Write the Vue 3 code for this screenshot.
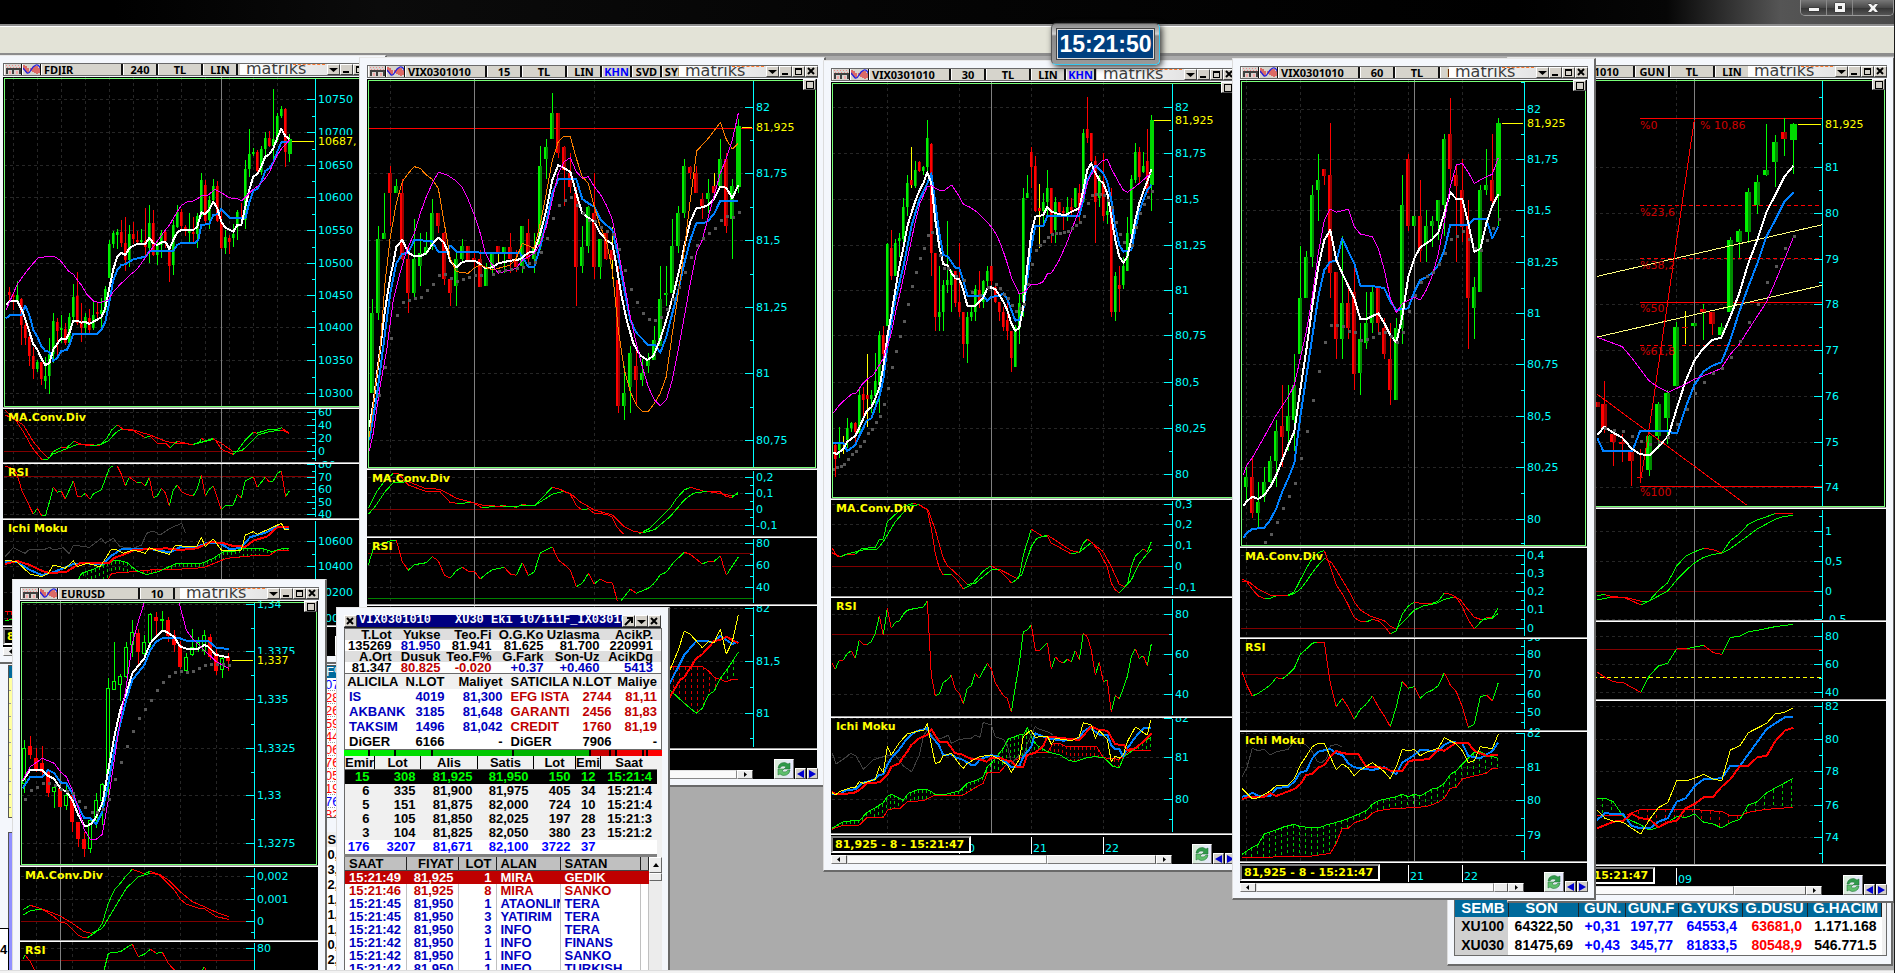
<script setup>
const UNIT = 3

const parse = (s) => s.trim().split(/\s+/).map((t) => t.split(',').map(Number))

function place(list, o) {
  return list.map(([x, y]) => [o[0] + x / UNIT, o[1] + y / UNIT])
}

function poly(s, o) {
  return place(parse(s), o).map((p) => p[0].toFixed(1) + ',' + p[1].toFixed(1)).join(' ')
}

/* Splits a curve into its rising and falling pieces. */
function trend(s, o) {
  const p = place(parse(s), o)
  const out = { up: '', down: '' }
  for (let i = 1; i < p.length; i++) {
    const k = p[i][1] < p[i - 1][1] ? 'up' : 'down'
    out[k] += `M${p[i - 1][0].toFixed(1)} ${p[i - 1][1].toFixed(1)}L${p[i][0].toFixed(1)} ${p[i][1].toFixed(1)}`
  }
  return out
}

function valueAt(p, x) {
  for (let i = 1; i < p.length; i++) {
    if (x >= p[i - 1][0] && x <= p[i][0]) {
      const k = (x - p[i - 1][0]) / (p[i][0] - p[i - 1][0] || 1)
      return p[i - 1][1] + k * (p[i][1] - p[i - 1][1])
    }
  }
  return null
}

/* Vertical hatching between the two edges of the cloud. */
function hatch(green, red, step, o) {
  const a = parse(green)
  const b = parse(red)
  const out = { up: '', down: '' }
  for (let x = a[0][0] + step / 2; x < a[a.length - 1][0]; x += step) {
    const ya = valueAt(a, x)
    const yb = valueAt(b, x)
    if (ya === null || yb === null || Math.abs(ya - yb) < 4) continue
    const px = Math.round(o[0] + x / UNIT) + 0.5
    out[ya < yb ? 'up' : 'down'] += `M${px} ${(o[1] + Math.min(ya, yb) / UNIT).toFixed(1)}V${(o[1] + Math.max(ya, yb) / UNIT).toFixed(1)}`
  }
  return out
}

function candles(s, o, w, hollow) {
  const list = s.trim().split(/\s+/)
  return list.map((t, i) => {
    const kind = t[0]
    const [x, hi, lo, top, bot] = t.slice(1).split(',').map(Number)
    const wide = i === list.length - 1 && !hollow ? 1 : 0
    const cx = Math.round(o[0] + x / UNIT)
    const y = (v) => Math.round(o[1] + v / UNIT)
    const up = kind === 'g'
    return {
      cx, w: w + wide, left: cx - Math.floor(w / 2),
      hi: y(hi), lo: y(lo), top: y(top), h: Math.max(1, y(bot) - y(top)),
      wick: kind === 'y' ? '#ffff00' : kind === 'r' ? '#ff0000' : '#00ff00',
      light: up ? (wide ? '#00d800' : '#00f000') : '#ff0000',
      dark: up ? (wide ? '#00d800' : '#008c00') : hollow ? '#ff0000' : '#a00000',
      hollow: hollow && up
    }
  })
}

const W = 'white', B = '#0080ff', M = '#ff00ff', O = '#ff8000', Y = '#ffff00', R = '#ff0000', D = '#404040'

const source = [
  {
    id: 'fdjir', name: 'FDJIR', cells: ['240', 'TL', 'LIN'], x: 3, right: 379, titleY: 63, axis: 315, cross: 221, bottoms: [407, 462, 518, 625],
    grid: [13, 37, 61, 85, 109, 133, 157, 181, 205, 229, 253, 277], ticks: [], thumb: 30, z: 1,
    panes: [
      { o: [0, 0], labels: [['10750', 298], ['10700', 396], ['10650', 494], ['10600', 592], ['10550', 689], ['10500', 788], ['10450', 886], ['10400', 982], ['10350', 1081], ['10300', 1178]], last: ['10687,', 422, 876],
        cw: 3, candles: 'r28,862,905,877,885 r40,880,930,885,890 g52,843,905,885,903 r64,893,1035,898,975 r76,960,1035,975,1015 r88,990,1098,1010,1068 r100,1040,1137,1068,1107 g112,1080,1115,1085,1107 r124,1085,1155,1085,1137 g136,1070,1167,1128,1142 g148,1013,1182,1063,1128 g160,938,1090,963,1063 r172,955,1068,965,993 g184,945,1030,985,990 r196,970,1035,988,1030 g208,938,1035,952,1030 g220,853,965,890,950 r232,815,975,888,970 r244,910,1027,970,983 g256,940,1005,952,985 r268,928,1003,953,990 g280,905,990,945,985 r292,910,960,935,943 g304,895,985,930,943 g316,857,935,867,930 g328,720,835,732,833 g340,693,743,700,733 g352,687,747,697,705 r364,660,740,697,728 r376,650,813,728,780 g388,675,800,703,780 r400,665,733,703,718 r412,693,735,720,725 g424,687,735,720,725 r436,623,765,723,740 g448,615,790,670,745 r460,630,767,670,765 g472,725,795,735,765 g484,690,775,700,735 r496,687,745,697,723 r508,740,845,745,797 g520,660,825,675,795 g532,615,685,637,680 r544,627,690,637,677 r556,675,707,680,693 g568,640,727,692,700 r580,650,725,695,703 g592,640,743,648,702 g604,518,650,540,648 r616,540,675,555,662 g628,587,687,600,660 g640,537,605,558,600 r652,543,665,557,663 r664,627,748,665,745 g676,690,762,710,745 r688,705,762,713,725 g700,673,742,703,713 g712,630,720,637,680 r724,610,670,650,658 g736,480,687,508,660 g748,387,530,462,508 g760,443,467,455,463 r772,450,515,455,513 g784,437,525,447,515 g796,397,475,413,447 r808,393,440,413,438 g820,267,480,418,438 g832,340,425,347,420 g844,318,353,328,347 r856,323,500,328,457 g868,402,487,418,462',
        lines: [
          [B, 2, '18,955 30,945 64,945 76,917 88,945 100,990 112,1010 124,1038 136,1053 148,1055 160,1083 172,1073 184,1053 200,1050 208,1035 220,1002 292,1002 304,990 316,965 328,905 340,840 352,810 364,795 376,793 400,778 436,770 450,753 520,753 532,735 544,728 585,728 595,720 604,675 628,672 640,645 652,643 664,627 688,653 736,655 748,607 760,572 772,567 784,545 796,513 808,505 820,487 832,455 844,427 868,425'],
          [W, 2, '18,915 30,903 52,903 70,940 85,985 100,1033 112,1048 124,1075 136,1095 148,1090 160,1048 184,1015 198,1018 208,1000 220,962 232,962 244,968 256,965 268,972 280,965 304,952 316,925 328,865 340,808 352,770 364,758 376,765 388,745 400,737 412,732 436,732 448,713 460,730 472,735 488,725 498,728 508,747 520,720 532,697 544,690 580,690 592,680 604,637 616,643 628,628 640,605 652,625 664,665 676,683 700,695 712,675 724,675 736,620 748,570 760,530 772,522 784,500 796,470 808,463 820,445 832,413 844,387 856,408 868,417'],
          [M, 1, '18,930 40,880 52,853 70,827 85,808 100,790 115,773 160,768 180,780 205,813 220,823 232,840 244,855 262,885 280,903 300,908 325,900 340,875 364,850 376,840 388,827 412,807 436,773 460,740 484,707 496,690 510,673 520,655 532,635 544,617 562,605 580,603 592,597 604,588 625,585 645,568 664,578 688,593 715,597 725,602 745,583 760,568 780,553 796,535 808,517 820,490 832,465 844,447 868,420']
        ] },
      { o: [0, 400], title: 'MA.Conv.Div', labels: [['60', 35], ['40', 74], ['20', 113], ['0', 154], ['-20', 194]], levels: [['#800000', 154]],
        trends: ['15,30 50,65 70,95 95,140 110,160 127,180 145,178 160,155 184,142 200,143 222,124 244,133 300,136 320,115 335,90 352,75 370,88 400,92 436,113 450,108 472,130 500,132 510,143 532,124 580,135 600,125 604,115 616,122 640,115 652,128 664,148 700,163 712,153 736,120 760,97 770,100 800,90 835,87 845,83 868,103', '15,45 40,55 70,75 100,125 125,155 145,175 160,162 190,150 235,132 270,137 300,134 325,122 350,95 365,87 400,90 450,105 500,125 530,130 580,133 640,118 664,130 700,155 725,152 750,130 775,105 800,97 840,90 868,97'] },
      { o: [0, 400], title: 'RSI', labels: [['80', 193], ['70', 232], ['60', 266], ['50', 305], ['40', 343]], levels: [['#800000', 229]],
        trends: ['15,198 35,205 50,220 65,270 100,343 112,325 125,347 137,345 150,300 160,260 172,277 184,273 196,297 220,242 232,288 244,290 256,280 270,298 280,282 304,270 315,240 328,205 338,198', '352,198 365,225 376,258 388,232 412,248 424,247 436,258 448,233 460,293 472,288 484,265 496,278 508,318 520,270 532,255 545,275 560,283 580,288 592,265 604,225 616,287 628,268 640,257 652,295 664,328 676,317 700,315 712,283 724,293 736,242 760,230 772,262 796,232 808,246 820,243 832,220 844,213 857,290 868,273'] },
      { o: [0, 400], title: 'Ichi Moku', labels: [['10600', 424], ['10400', 499], ['10200', 577], ['10000', 655]],
        cloud: ['15,662 60,655 140,650 225,560 235,538 245,520 280,508 325,487 350,480 380,487 410,512 440,524 475,515 530,490 600,492 640,475 670,455 700,455 730,445 785,445 815,455 845,446 868,446', '15,635 100,635 180,600 250,560 320,545 335,520 400,515 470,508 530,508 610,503 680,475 750,468 810,465 830,452 868,452', 12],
        lines: [
          [D, 1, '15,470 40,443 55,450 75,460 90,447 130,450 148,442 160,450 190,443 208,462 220,435 268,442 304,415 315,430 340,415 360,440 400,445 425,435 440,400 460,393 480,405 510,385 545,370 557,400'],
          [B, 2, '15,485 50,485 90,510 125,525 160,517 200,500 220,492 250,490 310,492 330,470 365,447 450,447 510,457 540,442 590,442 620,428 660,430 690,448 724,443 750,412 800,397 832,378 868,387'],
          [R, 2, '15,492 50,483 90,495 125,512 150,520 200,515 240,490 325,490 340,475 380,460 400,450 500,445 540,450 590,445 630,427 665,428 700,438 736,440 760,422 800,410 832,382 868,380'],
          [Y, 1, '15,480 50,485 90,522 125,530 145,520 160,495 196,505 220,482 232,500 262,490 300,500 320,470 332,450 345,447 370,460 400,450 436,460 448,443 480,455 508,463 525,437 590,440 604,413 616,440 640,417 664,450 712,450 724,450 736,405 760,395 772,403 800,390 844,370 856,390 868,388']
        ] }
    ]
  },
  {
    id: 'vix15', name: 'VIX0301010', cells: ['15', 'TL', 'LIN', 'KHN', 'SVD', 'SYM'], x: 367, right: 818, titleY: 65, axis: 753, cross: 474, bottoms: [468, 536, 604, 748],
    grid: [390, 594], ticks: [], thumb: 0, z: 2,
    panes: [
      { o: [360, 50], labels: [['82', 170], ['81,75', 370], ['81,5', 569], ['81,25', 770], ['81', 970], ['80,75', 1171]], last: ['81,925', 230, 1146], levels: [[R, 235]],
        cw: 4, candles: 'g37,747,1030,790,1028 g55,528,810,568,790 g73,430,567,550,567 r91,348,528,370,430 g109,388,430,408,430 r127,388,630,430,628 r145,590,790,628,730 g163,508,743,628,728 g181,550,708,610,648 g199,545,615,590,610 g217,447,600,490,590 r235,490,548,490,528 r253,545,705,550,688 r271,685,768,688,730 g289,610,768,628,708 g307,568,640,588,628 r325,588,630,588,630 r343,610,655,625,632 r361,600,710,628,710 g379,640,708,650,708 g397,610,668,612,650 y415,600,640,588,605 g433,590,668,590,605 r451,550,668,590,628 r469,600,665,628,650 g487,528,668,528,648 r505,508,645,550,628 g523,550,668,590,628 g541,288,600,348,590 g559,268,388,290,328 g577,128,267,190,267 r595,190,325,190,310 r613,288,468,290,360 r631,310,430,370,410 r649,410,768,430,650 g667,528,668,590,648 g685,468,608,470,588 r703,370,688,490,650 g721,568,688,568,650 r739,540,630,548,628 y757,530,688,600,630 r775,648,1088,690,1068 g793,948,1110,1030,1068 g811,888,1088,910,1010 r829,890,1068,948,990 g847,928,1008,970,990 g865,910,968,930,948 g883,828,930,870,930 g901,648,888,748,888 g919,648,768,730,735 g937,508,730,588,730 g955,468,608,490,588 g973,328,505,348,490 r991,348,388,350,370 r1009,348,430,370,430 r1027,430,508,448,468 g1045,388,490,430,448 y1063,370,450,408,430 g1081,268,410,328,408 r1099,310,548,328,528 g1117,388,628,408,508 g1135,208,430,228,410',
        dots: '58,1034 76,950 94,865 112,796 130,757 148,750 166,745 184,740 202,720 220,703 238,676 256,673 274,685 292,692 310,688 328,682 346,676 364,676 400,673 418,664 436,660 454,656 472,654 490,650 508,640 526,636 544,607 562,565 580,505 598,466 616,449 634,442 652,466 670,490 688,510 706,514 724,530 742,544 760,553 778,596 796,661 814,718 832,757 850,789 868,808 886,809 904,800 922,778 940,747 958,712 976,667 994,622 1012,586 1030,565 1048,550 1066,535 1084,510 1102,499 1120,502 1138,487',
        lines: [
          [B, 2, '28,1170 50,1040 75,850 91,730 109,640 127,612 145,608 163,570 215,573 235,605 260,605 271,587 289,605 343,605 361,608 480,610 505,650 523,650 541,590 560,510 577,430 595,388 649,388 667,447 685,460 703,470 721,508 739,525 757,540 775,620 793,720 811,810 829,848 865,885 885,885 901,908 919,860 937,790 955,720 973,640 991,570 1009,520 1030,520 1045,512 1063,490 1081,453 1135,453'],
          [W, 2, '28,1130 40,1060 50,980 60,900 75,780 91,680 100,640 109,590 127,570 145,608 160,617 181,618 199,610 217,583 235,563 250,575 262,600 271,635 289,652 307,637 325,632 343,632 361,642 375,655 397,652 415,640 451,632 480,628 505,608 523,605 541,550 559,480 577,390 595,345 613,355 631,365 649,430 667,490 690,507 703,515 721,550 739,570 757,582 770,650 785,740 800,810 820,880 840,915 862,930 880,918 900,870 919,810 940,735 960,650 975,580 991,515 1009,475 1027,472 1045,465 1060,450 1081,410 1099,413 1117,445 1135,405'],
          [O, 1, '28,1160 60,900 75,700 91,560 109,460 127,395 145,370 163,350 181,355 199,375 217,388 235,415 253,520 271,625 289,665 325,670 343,653 361,645 397,660 433,650 451,645 469,625 487,580 523,595 541,520 559,430 577,330 595,275 610,260 631,260 649,325 667,380 685,400 703,470 721,530 739,570 757,660 775,840 793,960 811,1025 829,1065 847,1084 865,1084 883,1060 901,1030 919,980 937,850 955,730 973,600 991,450 1010,303 1045,265 1081,217 1099,268 1117,297 1135,280'],
          [M, 1, '28,1203 40,1150 60,1010 80,900 100,750 120,670 140,600 163,550 181,490 199,440 217,400 235,367 262,375 289,393 307,412 325,450 343,495 361,550 375,605 390,635 415,670 433,665 451,660 469,655 487,630 505,620 523,610 541,580 559,530 577,450 595,370 613,335 631,323 649,365 667,385 685,380 703,410 721,433 739,465 757,508 775,600 793,700 811,800 829,880 847,950 865,1010 883,1050 901,1067 919,1050 937,990 955,900 973,800 991,700 1010,605 1027,570 1045,500 1063,435 1081,370 1099,325 1117,270 1135,190']
        ] },
      { o: [360, 460], title: 'MA.Conv.Div', labels: [['0,2', 50], ['0,1', 98], ['0', 146], ['-0,1', 194]], levels: [['#800000', 146]],
        trends: ['25,145 50,95 75,62 100,40 115,40 145,75 200,95 240,95 270,127 290,130 340,128 365,143 430,137 468,142 487,134 523,137 577,82 600,88 631,103 650,138 667,150 685,146 703,160 740,163 757,172 770,200 790,222', '838,221 870,205 900,175 930,145 950,115 973,90 991,82 1030,93 1081,95 1099,110 1117,112 1135,97', '25,163 45,140 75,95 100,68 145,65 195,85 240,88 290,115 365,135 430,140 525,136 577,103 610,94 631,100 660,125 703,150 757,165 793,200 820,213 850,219 885,208 930,170 973,120 1000,100 1040,94 1117,107 1135,102'] },
      { o: [360, 460], title: 'RSI', labels: [['80', 248], ['60', 314], ['40', 382]], levels: [['#800000', 280], ['#008000', 415]],
        trends: ['25,315 40,265 60,255 90,243 109,241 127,305 145,331 163,314 199,308 217,290 235,302 253,345 271,354 289,332 307,322 325,334 343,334 361,357 379,342 397,329 433,322 451,342 469,346 487,308 505,346 523,336 541,278 577,260 595,300 613,314 631,330 649,380 667,370 685,340 703,372 721,357 739,366 757,368 772,422', '783,422 811,388 829,400 865,385 883,370 901,344 919,337 937,312 955,294 973,277 991,283 1027,312 1045,304 1063,304 1081,287 1099,346 1135,291'] },
      { o: [360, 460], labels: [['82', 445], ['81,5', 602], ['81', 758]], extra: [835],
        cloud: ['930,690 973,730 1009,760 1027,745 1045,705 1063,693 1081,655 1099,632 1135,577', '930,620 1027,620 1045,632 1063,652 1099,665 1117,658 1135,658', 18],
        lines: [
          [B, 2, '900,700 930,668 950,630 973,585 1009,543 1063,545 1081,528 1099,540 1117,552 1135,545'],
          [R, 2, '900,740 930,710 960,660 973,652 1009,595 1027,583 1063,543 1081,540 1099,530 1135,550'],
          [Y, 1, '900,680 930,630 955,570 973,514 991,523 1027,563 1045,545 1063,547 1081,507 1099,582 1117,545 1135,465']
        ] }
    ]
  },
  {
    id: 'vix30', name: 'VIX0301010', cells: ['30', 'TL', 'LIN', 'KHN'], x: 831, right: 1236, titleY: 68, axis: 1172, cross: 991, bottoms: [498, 596, 716, 833],
    grid: [887, 959, 1031, 1103], ticks: [['20', 959], ['21', 1031], ['22', 1103]], thumb: 109, z: 3,
    panes: [
      { o: [820, 0], labels: [['82', 320], ['81,75', 458], ['81,5', 596], ['81,25', 734], ['81', 870], ['80,75', 1006], ['80,5', 1145], ['80,25', 1283], ['80', 1421]], last: ['81,925', 361, 1002],
        cw: 3, candles: 'r46,1330,1430,1335,1378 g58,1280,1375,1325,1350 y70,1308,1362,1325,1330 g82,1255,1345,1283,1320 g94,1265,1295,1268,1283 r106,1265,1330,1268,1297 g118,1160,1308,1185,1300 r130,1160,1255,1183,1200 y142,1062,1280,1185,1197 g154,1170,1240,1185,1197 g166,1060,1230,1143,1188 g178,993,1240,1005,1155 r190,978,1080,1005,1062 g202,730,978,733,977 r214,690,840,743,828 g226,718,828,730,828 g238,700,770,715,722 g250,593,740,622,717 g262,525,648,550,622 y274,440,563,540,555 g286,483,565,510,557 r298,483,515,487,512 g310,497,525,500,512 g322,360,518,413,500 r334,430,828,432,760 r346,758,993,760,952 g358,798,993,935,952 g370,840,993,855,937 g382,662,880,840,855 g394,810,935,812,855 r406,812,922,812,910 r418,730,952,905,937 r430,935,1075,937,1033 g442,935,1090,950,1033 g454,920,962,937,952 g466,855,962,868,937 r478,812,925,870,905 g490,840,925,843,905 g502,797,860,812,843 r514,797,855,798,842 r526,855,910,860,907 r538,905,962,907,937 r550,922,993,937,980 r562,908,1020,960,993 r574,992,1115,993,1075 g586,975,1100,980,1100 g598,880,1033,910,985 g610,563,950,595,907 g622,525,595,578,595 r633,440,565,455,500 r646,468,635,498,633 y658,552,743,625,633 g670,580,675,607,633 g682,510,650,565,605 r694,563,730,565,702 g706,590,730,607,690 r718,605,640,607,635 r730,620,690,632,640 g742,590,663,620,640 r754,593,650,622,630 g766,563,623,565,622 r778,552,662,580,620 g790,388,610,400,607 r802,290,430,388,413 r814,398,485,400,483 r826,468,730,483,607 g838,525,620,527,595 r850,458,662,545,648 g862,580,673,632,645 r874,565,950,635,937 g886,815,962,828,937 r898,798,935,855,867 g910,770,868,798,855 g922,650,812,700,812 g934,525,720,538,702 g946,430,550,457,540 r958,440,550,457,530 g970,457,520,497,515 r982,387,580,483,580 g994,345,633,360,555',
        dots: '40,1407 50,1402 62,1398 73,1392 85,1377 97,1363 109,1352 121,1338 133,1323 145,1299 157,1287 169,1267 181,1248 193,1213 205,1163 217,1102 229,1052 241,1008 253,963 265,913 276,858 288,815 300,774 312,744 324,705 336,697 360,765 372,805 384,803 408,828 432,840 456,875 480,885 504,862 528,853 540,863 552,883 564,895 576,916 588,934 600,925 612,913 624,853 636,792 648,750 660,735 672,722 684,710 696,702 708,700 720,699 732,697 744,692 756,684 768,675 780,665 792,648 804,608 816,585 828,583 840,583 852,585 864,600 876,622 888,665 900,703 912,727 936,735 948,680 960,640 972,613 984,590 996,574',
        lines: [
          [B, 2, '40,1328 70,1328 82,1353 106,1335 118,1308 140,1262 154,1255 178,1190 190,1140 202,1040 214,970 226,900 250,800 262,740 274,680 286,640 298,600 310,575 322,550 334,520 346,610 358,700 370,765 382,768 394,785 406,803 418,805 430,840 442,887 490,887 502,903 514,890 540,888 550,880 562,897 574,930 586,962 598,960 610,930 622,840 634,740 646,678 670,678 682,648 778,648 790,600 802,540 826,497 838,507 850,520 862,545 874,600 886,680 898,735 910,755 934,750 946,690 958,635 970,600 982,570 994,555'],
          [W, 2, '40,1358 50,1362 70,1347 82,1325 106,1308 118,1283 140,1233 154,1222 166,1195 178,1165 190,1100 202,1010 214,945 226,870 238,800 250,745 262,680 274,640 286,603 298,572 310,550 322,517 334,550 346,660 358,740 370,793 382,795 394,818 406,835 418,838 430,870 442,917 466,918 490,892 502,865 514,862 526,868 538,885 550,905 562,930 574,970 586,992 598,983 610,920 622,800 634,700 646,650 670,645 682,620 694,635 718,643 738,645 754,635 778,625 790,570 802,510 814,490 826,518 838,540 850,550 862,580 874,650 886,720 898,770 910,788 922,770 934,720 946,660 958,610 970,575 982,545 994,508'],
          [M, 1, '40,1240 60,1213 80,1195 95,1182 108,1180 125,1155 145,1135 160,1125 175,1100 190,1075 202,1040 214,1000 226,940 240,880 255,810 270,740 286,665 300,610 322,560 334,557 360,572 375,570 395,555 412,580 430,612 450,622 470,635 490,655 514,680 530,705 545,740 562,790 575,835 598,882 615,875 634,853 655,852 670,845 682,822 695,818 718,780 742,725 766,660 785,610 805,540 826,503 845,483 862,478 875,508 898,550 910,570 922,577 946,560 970,540 994,518']
        ] },
      { o: [820, 490], title: 'MA.Conv.Div', labels: [['0,3', 41], ['0,2', 103], ['0,1', 166], ['0', 227], ['-0,1', 290]], levels: [['#800000', 227]],
        trends: ['36,173 50,198 70,198 82,192 106,192 125,175 166,173 178,148 190,147 202,95 214,85 250,50 280,40 298,45 322,60 334,115 346,190 358,235 370,255 394,253 418,278 430,297 454,285 490,243 514,227 540,243 562,265 575,280 598,262 610,195 634,118 670,140 682,138 694,160 718,172 754,192 778,187 790,160 802,148 814,155 838,185 862,230 874,280 886,300 898,308 922,285 934,230 946,198 970,177 982,185 994,155', '36,188 60,200 82,192 130,180 172,177 190,155 226,95 250,68 270,48 298,44 325,60 346,120 370,205 382,227 400,242 442,283 465,280 514,240 538,238 590,265 605,255 634,170 650,145 682,135 754,182 778,187 814,158 850,185 874,230 898,283 915,290 934,270 958,220 994,177'] },
      { o: [820, 490], title: 'RSI', labels: [['80', 371], ['60', 491], ['40', 613]], levels: [['#800000', 431]],
        trends: ['36,520 46,538 58,510 70,510 82,490 94,483 106,505 118,450 130,463 142,463 154,455 166,430 178,378 190,435 202,355 214,415 226,397 238,393 250,373 262,361 286,355 310,352 322,333 334,555 346,618 358,612 370,577 382,570 394,556 406,597 418,610 430,642 442,595 454,587 466,550 478,565 502,520 514,537 526,578 550,617 562,625 574,667 586,590 598,520 610,425 622,420 634,404 646,480 660,480 682,458 694,538 706,500 718,514 730,519 742,508 754,516 766,482 778,510 790,430 802,440 814,480 826,555 838,517 850,575 862,570 874,666 886,617 898,626 910,595 922,560 934,500 946,476 958,505 970,497 982,527 994,462'] },
      { o: [820, 490], title: 'Ichi Moku', labels: [['82', 683], ['81', 802], ['80', 926]], extra: [988],
        cloud: ['36,1015 70,995 120,990 140,968 166,953 190,938 202,920 214,912 226,918 250,930 265,910 298,898 325,900 345,912 380,912 418,903 442,880 466,872 490,860 502,830 514,820 538,790 550,775 565,747 598,735 612,733 622,712 634,740 650,765 682,785 700,790 720,795 745,810 765,815 800,803 825,800 850,803 865,815 880,830 898,832 912,800 940,780 970,755 994,742', '36,1018 70,1005 118,1005 142,982 190,982 205,958 240,955 262,935 310,932 345,915 430,915 466,893 490,880 502,848 538,848 562,820 598,805 622,797 646,788 682,787 700,760 720,760 740,770 830,770 850,803 898,808 912,795 930,782 994,781', 12],
        lines: [
          [D, 1, '36,788 48,822 70,808 92,790 108,798 130,838 160,810 178,803 202,798 226,795 250,828 275,845 298,795 310,740 322,718 345,748 370,743 385,735 394,760 418,748 454,745 466,735 480,742 490,697 514,705 526,740 550,748 562,765 574,820 598,795 610,800 622,760 646,710 658,718 682,725 700,735'],
          [B, 2, '36,912 60,912 80,900 106,898 125,880 166,868 178,855 190,853 202,825 214,805 238,778 262,745 286,725 322,715 334,740 355,762 370,795 394,793 406,802 430,810 454,825 466,825 480,808 514,795 538,802 562,820 574,832 598,828 610,800 634,770 646,730 682,745 730,752 778,745 790,725 810,712 826,725 840,735 862,735 874,765 886,778 898,778 910,800 922,775 946,742 970,715 994,715'],
          [R, 2, '36,905 46,912 100,910 118,900 142,880 178,877 202,855 214,830 238,820 250,800 262,785 274,765 298,745 322,735 334,718 358,755 382,757 406,790 425,793 454,807 480,808 500,815 514,803 538,803 562,812 574,812 590,830 610,830 622,795 646,788 670,768 682,740 706,742 778,750 800,725 815,710 838,720 862,722 886,763 912,765 922,780 946,775 970,755 994,730'],
          [Y, 1, '36,908 46,915 58,905 94,893 106,893 118,875 130,880 166,868 178,830 190,848 202,770 214,795 238,758 262,732 298,722 312,720 322,700 334,765 346,820 358,818 370,797 394,790 418,822 430,835 442,820 478,800 514,795 538,808 562,825 574,847 598,808 610,740 633,720 646,742 682,738 694,763 706,745 754,752 778,740 790,698 814,705 826,745 838,722 862,748 874,815 886,798 898,805 910,795 922,755 946,712 958,718 970,728 982,735 992,690']
        ] }
    ]
  },
  {
    id: 'gun', name: 'VIX0301010', cells: ['GUN', 'TL', 'LIN'], x: 1515, right: 1887, titleY: 65, axis: 1822, cross: 1694, bottoms: [507, 620, 699, 864],
    grid: [1676], ticks: [['09', 1676]], thumb: 72, z: 5,
    panes: [
      { o: [1590, 0], labels: [['81', 500], ['80', 638], ['79', 776], ['78', 911], ['77', 1049], ['76', 1187], ['75', 1325], ['74', 1460]], extra: [292, 430], last: ['81,925', 373, 624],
        fib: [[355, ''], [616, '4 3'], [775, '4 3'], [907, ''], [1036, '4 3'], [1459, '']],
        notes: [['%0', 151, 377], ['% 10,86', 330, 377], ['%23,6', 151, 638], ['%38,2', 151, 797], ['%50', 151, 927], ['%61,8', 151, 1057], ['%100', 151, 1480]],
        cw: 6, candles: 'r22,1205,1220,1205,1220 r42,1143,1300,1212,1285 r70,1290,1397,1303,1327 r97,1303,1385,1327,1333 r124,1340,1458,1355,1382 r151,1347,1448,1430,1435 g178,1305,1428,1308,1410 g205,1205,1347,1213,1308 g232,1170,1332,1180,1253 g259,965,1158,982,1158 y286,932,1032,980,984 g313,968,980,968,978 m340,912,1020,927,936 r367,935,1005,935,973 g394,968,1005,982,1005 g421,712,937,720,935 g448,688,775,693,725 g475,563,728,577,695 g502,525,642,547,615 g529,372,527,510,525 g556,405,560,427,486 m583,355,468,395,416 g610,368,522,372,420',
        dots: '46,1285 73,1289 100,1294 127,1309 154,1323 181,1333 208,1326 235,1312 262,1273 290,1228 316,1180 343,1147 370,1120 397,1105 424,1072 451,1024 478,967 505,913 532,847 559,797 586,745 613,709',
        lines: [
          ['#ffff80', 1, '22,829 697,674'], ['#ffff80', 1, '22,1011 697,856'], [R, 1, '152,1440 180,1270 313,360'], [R, 1, '22,1183 470,1515'],
          [B, 2, '22,1315 40,1353 127,1353 151,1292 235,1292 245,1298 262,1298 286,1225 313,1155 340,1115 367,1097 394,1087 421,1020 448,935 475,860 502,790 529,710 556,660 583,605 610,577'],
          [W, 2, '22,1305 43,1280 70,1298 97,1313 124,1345 151,1363 180,1365 205,1340 235,1308 259,1230 286,1145 313,1082 340,1045 367,1020 394,1013 421,950 448,880 475,790 502,720 529,637 556,585 583,530 610,498'],
          [M, 1, '22,1012 97,1040 124,1072 151,1108 178,1143 205,1162 235,1177 286,1153 313,1138 367,1117 394,1105 421,1063 448,1033 475,990 529,907 556,845 583,780 610,713']
        ] },
      { o: [1440, 500], labels: [['1', 92], ['0,5', 182], ['0', 272], ['-0,5', 358]], extra: [47], levels: [['#800000', 272]],
        trends: ['471,286 495,284 520,290 550,292 575,302 602,315 628,302 655,272 683,248 710,198 737,168 764,155 791,145 820,149 845,159 871,122 900,100 925,73 952,60 1005,41 1060,41', '471,300 510,292 560,293 605,304 628,303 683,273 710,240 745,205 764,188 791,172 820,163 845,160 871,146 900,125 952,87 1005,58 1030,50 1060,46'] },
      { o: [1440, 500], labels: [['80', 407], ['60', 491], ['40', 576]], levels: [['#800000', 448], ['#ffff00', 532, '4 3']],
        trends: ['471,516 495,532 520,545 550,548 602,577 628,528 655,498 683,490 710,446 740,446 791,436 820,458 845,463 871,413 900,408 925,395 952,391 1005,380 1060,373'] },
      { o: [1440, 500], labels: [['82', 619], ['80', 718], ['78', 814], ['76', 914], ['74', 1012]], extra: [1060],
        cloud: ['471,895 495,895 520,905 550,950 602,975 628,990 655,982 683,967 710,950 740,952 764,942 791,967 820,972 845,984 871,968 900,958 925,915 952,905 980,878 1060,835', '471,946 560,945 602,928 760,928 800,932 845,934 871,947 900,947 925,937 980,928 1060,922', 27],
        lines: [
          [B, 2, '471,960 495,940 550,943 575,978 602,985 630,985 655,965 683,955 710,905 737,895 764,858 791,838 845,835 871,798 900,797 980,687 1034,652 1060,651'],
          [R, 2, '471,985 520,965 550,962 575,942 602,955 628,957 655,982 683,967 710,962 737,925 764,912 791,892 820,890 845,860 871,838 900,798 925,797 952,772 980,767 1005,725 1034,692 1060,683'],
          [Y, 1, '471,930 495,955 520,963 550,967 575,985 602,1002 628,960 655,923 683,908 710,842 740,842 764,835 791,823 820,837 845,842 871,750 900,737 925,698 980,670 1005,642 1034,637 1060,623']
        ] }
    ]
  },
  {
    id: 'vix60', name: 'VIX0301010', cells: ['60', 'TL', 'LIN'], x: 1240, right: 1588, titleY: 66, axis: 1524, cross: 1414, bottoms: [546, 637, 730, 861],
    grid: [1246, 1300, 1354, 1408, 1462], ticks: [['21', 1408], ['22', 1462]], thumb: 14, z: 6,
    panes: [
      { o: [1230, 50], labels: [['82', 176], ['81,75', 328], ['81,5', 481], ['81,25', 637], ['81', 790], ['80,75', 943], ['80,5', 1097], ['80,25', 1252], ['80', 1406]], extra: [97, 1480], last: ['81,925', 220, 816],
        cw: 4, candles: 'g49,1250,1350,1280,1310 r67,1217,1403,1280,1390 g85,1297,1435,1357,1388 g103,1250,1355,1297,1340 g121,1217,1300,1233,1295 g139,1110,1310,1143,1233 r157,1005,1250,1128,1160 g175,1005,1203,1097,1143 g193,912,1203,1005,1110 g211,588,912,745,912 g229,603,745,620,743 g247,405,650,435,620 g265,312,513,390,420 r283,357,405,357,377 r301,220,743,375,668 r319,665,927,667,868 g337,558,927,760,867 r355,700,867,760,835 r373,640,1020,727,972 g391,820,1035,868,970 g409,725,897,820,880 g427,710,850,727,820 r445,710,852,712,820 r463,803,927,835,912 r481,820,1065,927,1020 g499,803,1050,835,1050 g517,375,882,465,833 r535,312,543,328,528 g553,497,528,498,528 r571,390,635,498,603 g589,480,635,528,580 g607,497,590,513,528 g625,450,570,450,513 g643,252,558,268,465 r661,143,390,252,357 r679,345,635,375,407 r697,328,575,420,530 r715,450,897,525,745 g733,682,867,712,773 g751,405,727,420,725 g769,297,435,405,420 r787,252,470,390,453 g805,205,528,220,437',
        dots: '106,1477 124,1453 142,1417 160,1373 178,1339 196,1299 214,1225 232,1144 250,1050 268,962 286,877 304,824 322,826 340,829 358,844 376,847 394,870 412,868 430,862 448,849 466,847 484,858 502,877 520,847 538,784 556,735 574,697 592,679 610,665 628,643 646,610 664,567 682,558 700,542 718,567 736,595 754,600 772,571 790,535 808,508',
        lines: [
          [B, 2, '40,1465 49,1450 67,1437 103,1433 121,1410 139,1375 157,1325 175,1285 193,1240 211,1100 229,980 247,860 265,740 283,660 301,635 319,633 337,565 355,605 373,640 391,707 445,710 463,715 481,755 499,780 535,775 553,725 571,690 589,682 607,668 625,645 643,600 661,525 715,525 733,507 769,507 787,565 805,530'],
          [W, 2, '40,1368 49,1355 67,1340 85,1347 103,1335 121,1310 139,1275 157,1230 175,1185 193,1145 211,1020 229,900 247,770 265,650 283,570 301,540 319,630 337,670 355,708 373,745 391,807 409,807 430,797 445,790 463,820 481,855 499,878 517,800 535,680 553,625 571,592 589,580 607,568 625,548 643,490 661,427 679,447 697,447 715,520 733,605 751,597 769,520 787,467 805,433'],
          [M, 1, '40,1275 49,1248 67,1223 103,1160 139,1095 175,1040 193,1005 211,925 229,845 247,740 265,610 283,510 301,477 319,487 355,477 373,530 391,552 427,560 445,595 463,660 481,745 499,788 517,760 553,742 571,750 589,720 607,677 625,612 643,515 661,410 679,345 697,340 715,367 733,400 751,390 769,380 787,373 805,323']
        ] },
      { o: [1230, 540], title: 'MA.Conv.Div', labels: [['0,4', 46], ['0,3', 100], ['0,2', 154], ['0,1', 208], ['0', 263]], levels: [['#800000', 263]],
        trends: ['36,125 50,125 67,148 85,168 105,176 121,175 139,167 175,165 193,155 211,120 229,85 247,55 265,38 283,32 301,80 319,135 337,162 355,195 373,233 391,244 409,246 427,238 445,242 463,258 481,282 499,272 517,223 535,198 553,186 571,190 607,190 625,183 643,160 661,163 679,172 697,200 715,240 733,267 751,247 769,233 787,233 805,203', '36,117 60,128 85,148 120,165 175,167 193,160 211,148 229,125 247,98 265,75 285,55 305,68 325,100 355,150 373,185 391,210 420,228 463,242 481,258 499,267 530,235 553,210 580,198 620,190 643,178 670,172 690,178 715,210 733,232 755,239 787,235 805,220'] },
      { o: [1230, 540], title: 'RSI', labels: [['90', 291], ['80', 343], ['70', 402], ['60', 461], ['50', 517], ['40', 576]], levels: [['#800000', 401]],
        trends: ['36,395 50,435 67,468 85,460 100,450 121,435 139,413 157,417 175,403 193,385 211,343 229,328 247,310 260,307 283,307 301,430 319,500 337,475 355,502 373,538 391,508 409,493 427,468 445,500 463,528 481,560 499,500 517,424 535,445 553,440 571,475 589,458 607,451 625,437 643,398 661,435 679,455 697,500 715,562 733,553 751,470 769,465 787,483 805,428'] },
      { o: [1230, 540], title: 'Ichi Moku', labels: [['82', 578], ['81', 680], ['80', 781], ['79', 884]], extra: [934],
        cloud: ['36,943 67,922 85,913 103,882 139,870 157,862 193,853 211,860 265,864 289,855 337,842 373,828 409,812 427,793 445,782 499,770 517,763 535,770 553,763 571,768 607,747 625,743 643,730 661,703 679,693 697,672 715,655 733,637 751,635 769,645 805,655', '36,952 230,950 283,943 301,940 319,910 337,865 355,865 373,848 409,837 427,820 445,812 481,807 589,800 625,787 643,775 661,745 679,742 697,717 733,708 769,700 787,685 805,685', 18],
        lines: [
          [D, 1, '36,710 50,685 67,625 85,632 103,628 121,645 139,635 175,628 193,603 211,607 229,615 247,635 262,665 275,668 290,655 301,618 319,613 337,622'],
          [B, 2, '36,770 50,768 67,758 85,768 121,768 139,745 175,740 193,725 211,697 229,693 247,655 265,635 301,627 319,640 337,645 355,670 373,682 427,690 463,682 499,703 517,668 553,645 571,630 625,633 643,615 661,605 697,610 715,648 751,655 787,633 805,608'],
          [R, 2, '36,777 60,770 103,770 121,760 139,768 193,747 211,733 229,705 247,702 265,683 283,675 301,650 319,632 337,640 385,643 409,680 463,683 481,692 517,693 535,665 553,660 595,658 625,630 643,632 679,608 715,610 733,632 769,647 805,645'],
          [Y, 1, '36,745 67,777 85,773 121,753 139,737 175,735 193,717 211,675 229,648 247,620 265,610 283,610 301,650 319,690 337,672 355,683 373,708 391,690 427,668 463,695 481,716 499,680 517,627 535,633 553,628 571,647 589,637 625,625 643,593 679,612 697,632 715,668 733,662 751,620 787,626 805,583']
        ] }
    ]
  },
  {
    id: 'eurusd', name: 'EURUSD', cells: ['10'], x: 20, right: 319, titleY: 587, axis: 254, cross: 60, bottoms: [865, 940, 1000],
    grid: [36, 72, 108, 144, 180, 216], ticks: [], thumb: 20, z: 7,
    panes: [
      { o: [0, 570], labels: [['1,34', 102], ['1,3375', 244], ['1,335', 388], ['1,3325', 533], ['1,33', 676], ['1,3275', 818]], last: ['1,337', 271, 695],
        cw: 4, hollow: true, candles: 'g73,510,668,535,640 r91,498,567,528,555 r109,535,605,563,600 r127,528,620,580,605 r145,603,680,605,668 g163,645,713,652,662 r181,650,710,655,710 g199,645,720,675,706 r217,660,785,675,757 r235,755,830,757,808 r253,787,860,808,838 g271,745,850,750,833 g289,668,775,690,750 g307,640,765,643,690 g325,325,680,355,640 g343,215,360,332,356 g361,313,393,318,341 g379,215,325,230,318 g397,150,260,185,223 r415,178,287,190,245 g433,195,268,217,248 g451,130,230,133,215 r469,125,195,142,152 g487,123,183,147,149 r505,140,215,150,198 r523,180,245,195,225 r541,213,298,225,290 g559,250,303,260,300 g577,178,258,230,253 g595,200,247,215,235 g613,180,255,195,240 r631,192,270,202,262 r649,235,315,250,303 g667,255,323,263,298 r685,250,303,260,272',
        dots: '76,686 94,661 112,650 130,640 148,640 166,645 184,656 202,664 220,670 238,692 256,712 275,727 292,727 310,716 328,686 346,626 364,577 382,529 400,484 418,445 436,418 454,390 472,361 490,337 508,318 526,307 544,304 562,307 580,302 598,295 616,286 634,282 652,282 670,283 686,285',
        lines: [
          [B, 2, '68,655 91,620 127,620 145,600 163,610 181,637 199,640 217,670 235,712 253,744 270,745 289,763 307,725 325,640 343,540 361,460 379,390 397,330 433,285 451,240 469,215 487,205 540,205 559,212 625,213 649,233 686,237'],
          [W, 2, '68,632 91,600 127,600 145,618 163,627 181,655 199,665 217,690 235,735 253,767 262,768 275,760 289,740 307,700 325,600 343,500 361,420 379,370 397,310 415,287 433,265 451,220 469,200 487,183 500,185 523,202 541,230 559,236 595,236 613,225 625,230 649,255 686,262'],
          [M, 1, '68,630 91,590 127,565 163,580 181,605 199,620 217,660 235,712 253,780 271,808 289,808 307,793 325,690 343,570 361,450 379,350 397,220 415,155 432,100'],
          [M, 1, '538,100 559,180 577,205 607,235 649,275 686,295']
        ] },
      { o: [0, 570], title: 'MA.Conv.Div', labels: [['0,002', 919], ['0,001', 986], ['0', 1054]], extra: [1087], levels: [['#800000', 1054]],
        trends: ['68,1020 91,1006 110,1012 127,1018 163,1040 181,1057 199,1060 217,1078 235,1095 250,1103 262,1103 290,1085 307,1060 325,1000 343,960 361,940 379,917 397,898 433,911 451,904 475,912 500,937 523,960 541,988 559,1003 595,1014 613,1016 649,1040 686,1048', '68,1036 91,1022 127,1017 181,1038 217,1060 253,1085 275,1090 307,1075 343,1015 379,955 415,920 451,910 480,914 505,930 541,965 577,995 613,1010 649,1027 686,1040'] },
      { o: [0, 570], title: 'RSI', labels: [['80', 1134]], levels: [['#800000', 1171]],
        trends: ['68,1168 75,1155 91,1175 105,1202', '312,1202 325,1150 361,1145 397,1122 415,1160 433,1153 451,1138 469,1150 487,1147 505,1180 523,1200', '605,1202 613,1192 620,1202'] }
    ]
  }
]

const charts = source.map((w) => {
  const left = w.x + 1
  const width = w.right - 2 - left
  let y = w.titleY + 14
  const panes = w.panes.map((p, i) => {
    const y0 = y
    const h = w.bottoms[i] - y0
    y = w.bottoms[i] + 2
    const o = p.o
    const py = (v) => Math.round(o[1] + v / UNIT)
    const labels = (p.labels || []).map(([t, v]) => ({ t, y: py(v) }))
    const minor = labels.slice(1).map((l, k) => Math.round((l.y + labels[k].y) / 2)).concat((p.extra || []).map(py))
    return {
      main: i === 0, title: p.title, y0, h, labels, minor,
      levels: (p.levels || []).map(([c, v, dash]) => ({ c, y: py(v), dash })),
      fib: (p.fib || []).map(([v, dash]) => ({ y: py(v), dash, x: Math.round(o[0] + 50) })),
      notes: (p.notes || []).map(([t, x, v]) => ({ t, x: Math.round(o[0] + x / UNIT), y: py(v) + 3 })),
      last: p.last && { t: p.last[0], y: py(p.last[1]), x: Math.round(o[0] + p.last[2] / UNIT) },
      candles: p.candles ? candles(p.candles, o, p.cw, p.hollow) : [],
      dots: p.dots ? place(parse(p.dots), o).map(([a, b]) => [Math.round(a) - 1, Math.round(b) - 1]) : [],
      lines: (p.lines || []).map(([c, sw, s]) => ({ c, sw, pts: poly(s, o) })),
      trends: (p.trends || []).map((s) => trend(s, o)),
      cloud: p.cloud && { g: poly(p.cloud[0], o), r: poly(p.cloud[1], o), fill: hatch(p.cloud[0], p.cloud[1], p.cloud[2], o) }
    }
  })
  return { ...w, left, width, panes }
})

const frame = (w) => ({ left: w.x - 8 + 'px', top: w.titleY - 8 + 'px', width: w.right - w.x + 16 + 'px', zIndex: w.z })

const summary = [
  { head: ['T.Lot', 'Yukse', 'Teo.Fi', 'O.G.Ko', 'Uzlasma', 'AcikP.'], vals: [['135269', ''], ['81.950', 'blue'], ['81.941', ''], ['81.625', ''], ['81.700', ''], ['220991', '']] },
  { head: ['A.Ort', 'Dusuk', 'Teo.F%', 'G.Fark', 'Son-Uz', 'AcikDg'], vals: [['81.347', ''], ['80.825', 'red'], ['-0.020', 'red'], ['+0.37', 'blue'], ['+0.460', 'blue'], ['5413', 'blue']] }
]
const brokers = [
  ['IS', '4019', '81,300', 'EFG ISTA', '2744', '81,11'],
  ['AKBANK', '3185', '81,648', 'GARANTI', '2456', '81,83'],
  ['TAKSIM', '1496', '81,042', 'CREDIT', '1760', '81,19'],
  ['DiGER', '6166', '-', 'DiGER', '7906', '-']
]
const balance = [[24, '#00ff00'], [24, '#00e600'], [36, '#00dc00'], [80, '#00c800'], [75, '#00b400'], [19, '#c80000'], [4, '#c80000'], [25, '#f00000'], [2, '#f00000'], [14, '#ff0000']]
const depth = [
  ['15', '308', '81,925', '81,950', '150', '12', '15:21:4'],
  ['6', '335', '81,900', '81,975', '405', '34', '15:21:4'],
  ['5', '151', '81,875', '82,000', '724', '10', '15:21:4'],
  ['6', '105', '81,850', '82,025', '197', '28', '15:21:3'],
  ['3', '104', '81,825', '82,050', '380', '23', '15:21:2'],
  ['176', '3207', '81,671', '82,100', '3722', '37', '']
]
const trades = [
  ['15:21:49', '81,925', '1', 'MIRA', 'GEDIK', 'hot'],
  ['15:21:46', '81,925', '8', 'MIRA', 'SANKO', 'red'],
  ['15:21:45', '81,950', '1', 'ATAONLIN', 'TERA', 'blue'],
  ['15:21:45', '81,950', '3', 'YATIRIM', 'TERA', 'blue'],
  ['15:21:42', '81,950', '3', 'INFO', 'TERA', 'blue'],
  ['15:21:42', '81,950', '1', 'INFO', 'FINANS', 'blue'],
  ['15:21:42', '81,950', '1', 'INFO', 'SANKO', 'blue'],
  ['15:21:42', '81,950', '1', 'INFO', 'TURKISH', 'blue']
]
const indices = [
  ['XU100', '64322,50', '+0,31', '197,77', '64553,4', '63681,0', '1.171.168'],
  ['XU030', '81475,69', '+0,43', '345,77', '81833,5', '80548,9', '546.771.5']
]
const changes = [['07', 'b'], ['28', 'r'], ['26', 'r'], ['59', 'r'], ['44', 'r'], ['06', 'r'], ['76', 'r'], ['05', 'r'], ['19', 'r'], ['76', 'b'], ['82', 'r']]
const sums = ['0,', '3,', '2,', '1,', '1,', '1,', '0,', '2,']
</script>

<template>
  <div class="screen">
    <header class="caption">
      <div class="glass">
        <button aria-label="Minimize"><svg width="12" height="12"><rect x="1" y="6" width="10" height="3" /></svg></button>
        <button aria-label="Maximize"><svg width="12" height="12"><path d="M1 1h10v9H1zM4 4v3h4V4z" fill-rule="evenodd" /></svg></button>
        <button class="quit" aria-label="Close"><svg width="12" height="12"><path d="M1 2h3l2 2 2-2h3L8 6l3 4H8L6 8l-2 2H1l3-4z" /></svg></button>
      </div>
    </header>
    <div class="toolbar"></div>
    <time class="clock"><span>15:21:50</span></time>

    <main class="desk">
      <section class="under quotes" aria-label="Fiyatlar">
        <div class="under-list">
          <div class="under-head">F%</div>
          <div v-for="(c, i) in changes" :key="i" class="under-row" :class="c[1]">{{ c[0] }}</div>
        </div>
      </section>
      <section class="under totals" aria-label="Sonuclar">
        <div class="violet"></div>
        <div class="under-list plain">
          <div class="sum-head">So</div>
          <div v-for="(c, i) in sums" :key="i" class="sum-row">{{ c }}</div>
        </div>
      </section>
      <div class="scrap">4</div>

      <section class="win index-win">
        <div class="index-box">
          <table class="index">
            <colgroup><col v-for="n in 7" :key="n" :class="'ic' + n" /></colgroup>
            <thead><tr><th v-for="h in ['SEMB', 'SON', 'GUN.', 'GUN.F', 'G.YUKS', 'G.DUSU', 'G.HACIM']" :key="h">{{ h }}</th></tr></thead>
            <tbody><tr v-for="r in indices" :key="r[0]"><td v-for="(c, i) in r" :key="i">{{ c }}</td></tr></tbody>
          </table>
        </div>
      </section>

      <section v-for="w in charts" :key="w.id" class="win" :style="frame(w)">
        <div class="title">
          <div class="cells">
            <button class="cell mark" aria-label="Menu">
              <svg width="17" height="11" shape-rendering="crispEdges"><rect width="17" height="11" fill="#d8d4d0" /><path d="M1 1h15M2 3h13" stroke="#f08888" stroke-dasharray="1 2" /><path d="M2 10V5h13v5M8 5v5" fill="none" stroke="#404040" stroke-width="2" /><path d="M4 8h2M11 8h2" stroke="#f4a8a8" stroke-width="3" /></svg>
            </button>
            <button class="cell wave" aria-label="Gosterge">
              <svg width="18" height="11"><path d="M1 1v5M3 2v6M5 4v5M8 4v3M10 3v5M12 2v7M14 2v8M16 4v5" stroke="#e00000" stroke-width="1" /><path d="M0 4L4 9Q6 10 8 6T13 1T18 6" fill="none" stroke="#2020e0" stroke-width="1.3" /></svg>
            </button>
            <button class="cell sym">{{ w.name }}</button>
            <button v-for="c in w.cells" :key="c" class="cell" :class="'c-' + c.toLowerCase()">{{ c }}</button>
          </div>
          <div class="brand"><span>matriks</span></div>
          <button class="tb" aria-label="Liste"><svg width="9" height="9"><path d="M0 3h9L4.500 7z" /></svg></button>
          <button class="tb" aria-label="Kucult"><svg width="9" height="9"><path d="M1 6h6v2H1z" /></svg></button>
          <button class="tb" aria-label="Buyut"><svg width="9" height="9"><path d="M1 1h7v7H1zM2 3v4h5V3z" fill-rule="evenodd" /></svg></button>
          <button class="tb" aria-label="Kapat"><svg width="9" height="9"><path d="M1 1l6 6M7 1l-6 6" stroke="#000" stroke-width="2" /></svg></button>
        </div>

        <div class="body">
          <button class="corner" aria-label="Ekran"></button>
          <template v-for="(p, i) in w.panes" :key="i">
            <svg class="pane" :width="w.width" :height="p.h" :viewBox="`${w.left} ${p.y0} ${w.width} ${p.h}`">
              <g shape-rendering="crispEdges" fill="none">
                <path v-for="g in w.grid" :key="'g' + g" class="grid" :d="`M${g + 0.5} ${p.y0}v${p.h}`" />
                <path v-for="l in p.labels" :key="'h' + l.t" class="grid" :d="`M${w.left} ${l.y + 0.5}H${w.axis - 8}`" />
                <path v-for="l in p.levels" :key="'l' + l.y" :stroke="l.c" :stroke-dasharray="l.dash" :d="`M${w.left} ${l.y + 0.5}H${w.axis}`" />
                <path v-for="l in p.fib" :key="'f' + l.y" stroke="#f00" :stroke-dasharray="l.dash" :d="`M${l.x} ${l.y + 0.5}H${w.axis}`" />
                <path class="cross" :d="`M${w.cross + 0.5} ${p.y0}v${p.h}`" />
                <g v-for="(c, k) in p.candles" :key="'c' + k">
                  <rect :x="c.cx" :y="c.hi" width="1" :height="c.lo - c.hi" :fill="c.wick" />
                  <rect v-if="c.hollow" :x="c.left + 0.5" :y="c.top + 0.5" :width="c.w - 1" :height="c.h" fill="#000" stroke="#00ff00" />
                  <template v-else>
                    <rect :x="c.left" :y="c.top" :width="c.w" :height="c.h" :fill="c.dark" />
                    <rect :x="c.left" :y="c.top" :width="Math.ceil(c.w / 2)" :height="c.h" :fill="c.light" />
                  </template>
                </g>
                <template v-if="p.cloud">
                  <path :d="p.cloud.fill.up" stroke="#00c800" stroke-dasharray="3 3" />
                  <path :d="p.cloud.fill.down" stroke="#d80000" stroke-dasharray="3 3" />
                  <polyline :points="p.cloud.r" stroke="#ff0000" />
                  <polyline :points="p.cloud.g" stroke="#00ff00" />
                </template>
                <template v-for="(t, k) in p.trends" :key="'t' + k">
                  <path :d="t.up" stroke="#00ff00" /><path :d="t.down" stroke="#ff0000" />
                </template>
                <polyline v-for="(l, k) in p.lines" :key="'p' + k" :points="l.pts" :stroke="l.c" :stroke-width="l.sw" stroke-linejoin="round" />
                <rect v-for="(d, k) in p.dots" :key="'d' + k" :x="d[0]" :y="d[1]" width="3" height="3" fill="#585858" />
                <path class="axis" :d="`M${w.axis + 0.5} ${p.y0 + 1}v${p.h - 2}`" />
                <path v-for="l in p.labels" :key="'a' + l.t" class="axis" :d="`M${w.axis - 8} ${l.y + 0.5}h8`" />
                <path v-for="m in p.minor" :key="'m' + m" class="axis" :d="`M${w.axis - 3} ${m + 0.5}h3`" />
              </g>
              <text v-for="n in p.notes" :key="n.t" class="note" :x="n.x" :y="n.y">{{ n.t }}</text>
              <text v-for="l in p.labels" :key="l.t" class="scale" :x="w.axis + 3" :y="l.y + 4">{{ l.t }}</text>
              <g v-if="p.last">
                <rect :x="w.axis + 2" :y="p.last.y - 6" width="58" height="11" />
                <path :d="`M${p.last.x} ${p.last.y + 0.5}H${w.axis - 1}`" stroke="#ff0" />
                <text class="scale now" :x="w.axis + 3" :y="p.last.y + 4">{{ p.last.t }}</text>
              </g>
              <text v-if="p.title" class="study" :x="w.left + 4" :y="p.y0 + 12">{{ p.title }}</text>
              <rect v-if="p.main" :x="w.left + 0.5" :y="p.y0 + 1.5" :width="w.width - 1" :height="p.h - 2" fill="none" stroke="#78ff78" shape-rendering="crispEdges" />
            </svg>
            <div class="sep"></div>
          </template>

          <div class="foot">
            <div class="foot-left" :style="{ width: w.axis - w.x + 'px' }">
              <div class="strip">
                <svg class="ruler" :viewBox="`${w.x} 0 ${w.axis - w.x} 18`" :width="w.axis - w.x" height="18">
                  <g v-for="t in w.ticks" :key="t[0]"><path :d="`M${t[1] + 0.5} 1v17`" stroke="#fff" /><text class="scale" :x="t[1] + 2" y="16">{{ t[0] }}</text></g>
                </svg>
                <output class="price">81,925 - 8 - 15:21:47</output>
              </div>
              <div class="scroll">
                <button class="sb" aria-label="Sola kaydir"><svg width="4" height="5"><path d="M3 0v5L0 2.500z" /></svg></button>
                <div class="rail"></div>
                <div v-if="w.thumb" class="thumb" :style="{ width: w.thumb + 'px' }"></div>
                <button class="sb" aria-label="Saga kaydir"><svg width="4" height="5"><path d="M1 0v5l3-2.500z" /></svg></button>
              </div>
            </div>
            <div class="nav">
              <button class="refresh" aria-label="Yenile">
                <svg width="16" height="16" viewBox="0 0 16 16"><path d="M2 7a6 6 0 0 1 10-4l2-1v6H8l2-2a4 4 0 0 0-6 1z" fill="#2f9a4a" stroke="#186b30" stroke-width=".5" /><path d="M14 9a6 6 0 0 1-10 4l-2 1V8h6l-2 2a4 4 0 0 0 6-1z" fill="#5fbf6c" stroke="#186b30" stroke-width=".5" /></svg>
              </button>
              <button class="arrow" aria-label="Geri"><svg width="7" height="8"><path d="M7 0v8L0 4z" /></svg></button>
              <button class="arrow" aria-label="Ileri"><svg width="7" height="8"><path d="M0 0v8l7-4z" /></svg></button>
            </div>
          </div>
        </div>
      </section>

      <section class="win book">
        <div class="book-title">
          <button class="tb" aria-label="Kapat"><svg width="9" height="9"><path d="M1 1l6 6M7 1l-6 6" stroke="#000" stroke-width="2" /></svg></button>
          <h2><span>VIX0301010</span><span>XU30 Eki 10/111F_IX0301010</span></h2>
          <button class="tb" aria-label="Ac"><svg width="9" height="9"><path d="M1 8l6-6M3 1h5v5" fill="none" stroke="#000" stroke-width="2" /></svg></button>
          <button class="tb" aria-label="Liste"><svg width="9" height="9"><path d="M0 3h9L4.500 7z" /></svg></button>
          <button class="tb" aria-label="Pencereyi kapat"><svg width="9" height="9"><path d="M1 1l6 6M7 1l-6 6" stroke="#000" stroke-width="2" /></svg></button>
        </div>

        <table class="sum">
          <tbody>
            <template v-for="(s, i) in summary" :key="i">
              <tr><th v-for="h in s.head" :key="h">{{ h }}</th></tr>
              <tr><td v-for="(v, k) in s.vals" :key="k" :class="v[1]">{{ v[0] }}</td></tr>
            </template>
          </tbody>
        </table>

        <table class="brokers">
          <thead><tr><th>ALICILA</th><th>N.LOT</th><th>Maliyet</th><th>SATICILA</th><th>N.LOT</th><th>Maliye</th></tr></thead>
          <tbody><tr v-for="b in brokers" :key="b[0]"><td v-for="(c, i) in b" :key="i">{{ c }}</td></tr></tbody>
        </table>

        <div class="balance"><i v-for="(b, i) in balance" :key="i" :style="{ flexGrow: b[0], background: b[1] }"></i></div>

        <table class="depth">
          <thead><tr><th>Emir</th><th>Lot</th><th>Alis</th><th>Satis</th><th>Lot</th><th>Emir</th><th>Saat</th></tr></thead>
          <tbody><tr v-for="d in depth" :key="d[2]"><td v-for="(c, i) in d" :key="i">{{ c }}</td></tr></tbody>
        </table>

        <div class="tape">
          <table class="trades">
            <thead><tr><th>SAAT</th><th>FIYAT</th><th>LOT</th><th>ALAN</th><th>SATAN</th><th></th></tr></thead>
            <tbody><tr v-for="(t, i) in trades" :key="i" :class="t[5]"><td v-for="n in 5" :key="n">{{ t[n - 1] }}</td><td></td></tr></tbody>
          </table>
          <div class="vscroll">
            <button class="vb" aria-label="Yukari"><svg width="6" height="4"><path d="M0 4h6L3 0z" /></svg></button>
            <div class="vthumb"></div>
          </div>
        </div>
      </section>
    </main>
    <div class="bottom"></div>
  </div>
</template>

<style>
html, body { background: #ababab; overflow: hidden; }
</style>

<style scoped>
* { box-sizing: border-box; }
button { padding: 0; margin: 0; font: inherit; color: inherit; border-radius: 0; }
.screen { position: relative; width: 100%; height: 100vh; overflow: hidden; background: #ababab; font-family: "Liberation Sans", sans-serif; border-right: 1px solid #1a1a1a; }
.caption { height: 24px; background: linear-gradient(90deg, #000 0 6%, #0b0b0b 20%, #050505 45%, #000 80%, #060606 88%, #555 94%, #4a4a4a); display: flex; justify-content: flex-end; align-items: flex-start; }
.glass { display: flex; border: 1px solid #999; border-top: 0; border-radius: 0 0 5px 5px; overflow: hidden; }
.glass button { width: 26px; height: 15px; border: 0; border-right: 1px solid #888; background: linear-gradient(#777, #4a4a4a 50%, #333 51%, #555); display: flex; align-items: center; justify-content: center; }
.glass .quit { width: 40px; border-right: 0; }
.glass svg { fill: #f4f4f4; stroke: #333; stroke-width: 1px; paint-order: stroke; }
.toolbar { height: 32px; background: #e3e3d7; border-top: 2px solid #8e8e8e; box-shadow: inset 0 1px #fff; border-bottom: 3px solid #8c8c8c; }
.clock { position: absolute; z-index: 20; left: 1051px; top: 23px; width: 109px; height: 42px; padding: 5px; border-radius: 5px; border: 1px solid #555; border-right-color: #35c8f0; border-bottom-color: #35c8f0; background: linear-gradient(#888, #d0d0d0 25%, #8a8a8a 30%, #999); box-shadow: 2px 2px 6px #333; display: flex; }
.clock span { flex: 1; display: flex; align-items: center; justify-content: center; background: #004080; border: 1px solid #ddd; outline: 1px solid #444; color: #fff; font-weight: bold; font-size: 23px; line-height: 30px; }
.bottom { position: absolute; left: 0; right: 0; bottom: 0; height: 3px; background: #f2f2f2; border-top: 1px solid #ddd; z-index: 30; }

.win { position: absolute; background: #f4f7fc; padding: 7px 7px 6px; border: 1px solid #e8e8e8; border-right: 2px solid #696969; border-bottom: 2px solid #696969; border-left-color: #dcdcdc; }
.title { display: flex; height: 13px; background: #d4d0c8; border: 1px solid #6a6a6a; border-right: 0; margin: 0 -1px 1px 0; overflow: hidden; }
.cells { display: flex; flex: 1; min-width: 0; overflow: hidden; }
.cell { flex: none; height: 11px; width: 35px; border: 0; border-left: 1px solid #fff; border-right: 2px solid #111; background: #d6d4cc; font: bold 11px/12px "Noto Sans", sans-serif; color: #000; text-align: center; overflow: hidden; white-space: nowrap; }
.cell svg { display: block; }
.mark { width: 18px; border-right-width: 1px; }
.wave { width: 19px; border-right-width: 1px; }
.sym { width: 82px; text-align: left; padding-left: 2px; }
.c-tl { width: 45px; }
.c-khn { width: 30px; color: #0000ff; }
.c-svd, .c-sym { width: 30px; }
.c-lin { width: 35px; }
.brand { flex: none; width: 87px; background: linear-gradient(90deg, #fff, #e4e4e4); overflow: hidden; position: relative; }
.brand::after { content: ""; position: absolute; top: 0; left: 53px; width: 32px; border-top: 1px dashed #ff7a30; }
.brand span { display: block; margin-left: 6px; font: 16px/9px "DejaVu Sans", sans-serif; color: #3c3c3c; white-space: nowrap; }
.tb { flex: none; width: 13px; height: 11px; border: 1px solid #fff; border-right-color: #404040; border-bottom-color: #404040; background: #d4d0c8; display: flex; align-items: center; justify-content: center; }
.body { position: relative; background: #000; display: flex; flex-direction: column; }
.corner { position: absolute; right: 1px; top: 0; width: 13px; height: 11px; border: 1px solid #fff; border-right-color: #555; border-bottom-color: #555; background: #d4d0c8; display: flex; align-items: center; justify-content: center; }
.corner::after { content: ""; width: 6px; height: 6px; border: 1px solid #000; }
.pane { display: block; flex: none; margin-left: 1px; background: #000; overflow: hidden; }
.grid { stroke: #262626; stroke-dasharray: 3 3; }
.cross { stroke: #808080; }
.axis { stroke: #00ffff; }
.scale { font: 11px "DejaVu Sans", sans-serif; fill: #00ffff; }
.now { fill: #ffff00; }
.note { font: 11px "DejaVu Sans", sans-serif; fill: #d00000; }
.study { font: bold 11px "DejaVu Sans", sans-serif; fill: #ffff00; }
.sep { height: 2px; background: linear-gradient(#a0a0a0 50%, #fff 50%); }
.foot { display: flex; justify-content: space-between; align-items: flex-end; height: 29px; }
.foot-left { flex: none; }
.strip { position: relative; height: 20px; overflow: hidden; padding-top: 1px; }
.ruler { display: block; }
.price { position: absolute; left: 0; top: 1px; width: 140px; height: 17px; padding-left: 2px; border: 2px solid #808080; border-right-color: #fff; border-bottom-color: #fff; background: #000; color: #ffff00; font: bold 11px/13px "DejaVu Sans", sans-serif; white-space: nowrap; overflow: hidden; }
.scroll { display: flex; height: 9px; background: #d4d0c8; }
.sb, .thumb { flex: none; width: 16px; height: 9px; background: #ececec; border: 1px solid #fff; border-right-color: #555; border-bottom-color: #777; }
.sb { display: flex; align-items: center; justify-content: center; }
.rail { flex: 1; background: #fafafa; border: 1px solid #e0e0e0; border-right-color: #888; border-bottom-color: #888; }
.nav { display: flex; align-items: flex-end; gap: 1px; margin-right: -1px; }
.refresh { width: 20px; height: 20px; border: 1px solid #fff; border-right-color: #777; border-bottom-color: #777; background: linear-gradient(90deg, #d8ecd8, #e8e8ff); display: flex; align-items: center; justify-content: center; }
.arrow { width: 11px; height: 11px; border: 1px solid #fff; border-right-color: #555; border-bottom-color: #555; background: #d4d0c8; display: flex; align-items: center; justify-content: center; }
.arrow svg { fill: #0000d0; }

table { border-collapse: collapse; border-spacing: 0; table-layout: fixed; }
th, td { padding: 0; white-space: nowrap; }

.book { left: 336px; top: 607px; width: 334px; z-index: 8; font-weight: bold; font-size: 13px; padding: 7px; }
.book-title { display: flex; height: 13px; background: #000080; border-bottom: 1px solid #222; }
.book-title .tb { width: 13px; height: 12px; }
.book-title h2 { flex: 1; min-width: 0; margin: 0; padding-left: 2px; overflow: hidden; white-space: nowrap; color: #fff; font: bold 12px/10px "Liberation Mono", monospace; display: flex; gap: 24px; }
.book table { width: 318px; line-height: 15px; }
.sum { border: 1px solid #6a6a6a; background: #fff; }
.sum th, .sum td { height: 11px; line-height: 11px; text-align: right; }
.sum th { background: #dedede; }
.sum th:nth-child(1) { width: 47px; }
.sum th:nth-child(2) { width: 49px; }
.sum th:nth-child(3) { width: 51px; }
.sum th:nth-child(4) { width: 52px; }
.sum th:nth-child(5) { width: 56px; }
.sum th:nth-child(6), .sum td:nth-child(6) { padding-right: 8px; }
.blue { color: #0000c0; }
.red { color: #c00000; }
.brokers { background: #fff; border: 1px solid #6a6a6a; border-top: 0; }
.brokers th { background: #f0f0f0; }
.brokers th, .brokers td { height: 15px; text-align: right; }
.brokers th:nth-child(1) { width: 54px; text-align: right; }
.brokers th:nth-child(2) { width: 46px; }
.brokers th:nth-child(3) { width: 58px; }
.brokers th:nth-child(4) { width: 66px; text-align: left; padding-left: 8px; }
.brokers th:nth-child(5) { width: 43px; }
.brokers th:nth-child(6), .brokers td:nth-child(6) { padding-right: 4px; }
.brokers td { color: #0000c0; }
.brokers td:nth-child(1) { text-align: left; padding-left: 4px; }
.brokers td:nth-child(4) { text-align: left; padding-left: 8px; }
.brokers td:nth-child(n + 4) { color: #c00000; }
.brokers tr:last-child td { color: #000; }
.balance { display: flex; gap: 2px; height: 6px; width: 318px; background: #000; }
.balance i { flex-basis: 0; }
.depth { background: #f0f0f0; border: 1px solid #6a6a6a; border-top: 0; border-right: 5px solid #f0f0f0; border-bottom: 3px solid #808080; }
.depth th { height: 13px; line-height: 13px; background: #f0f0f0; border-right: 1px solid #000; border-bottom: 1px solid #666; text-align: center; overflow: hidden; }
.depth td { height: 14px; line-height: 14px; text-align: right; padding-right: 5px; }
.depth th:nth-child(1) { width: 30px; }
.depth th:nth-child(2) { width: 46px; }
.depth th:nth-child(3) { width: 57px; }
.depth th:nth-child(4) { width: 56px; }
.depth th:nth-child(5) { width: 42px; }
.depth th:nth-child(6) { width: 25px; }
.depth tbody tr:first-child { background: #000; color: #00ff00; }
.depth tbody tr:last-child { background: #fff; color: #0000ff; }
.tape { display: flex; width: 318px; background: #fff; border-left: 1px solid #6a6a6a; }
.book .trades { width: 304px; flex: none; }
.trades th { height: 13px; line-height: 13px; background: #c0c0c0; border-right: 1px solid #222; border-bottom: 1px solid #444; }
.trades td { height: 13px; line-height: 13px; border-right: 1px solid #c0c0c0; }
.trades th:nth-child(1) { width: 61px; }
.trades th:nth-child(2) { width: 52px; }
.trades th:nth-child(3) { width: 38px; }
.trades th:nth-child(4) { width: 64px; }
.trades th:nth-child(5) { width: 80px; }
.trades th, .trades td { text-align: left; padding-left: 4px; }
.trades td:nth-child(4) { overflow: hidden; }
.trades th:nth-child(2), .trades td:nth-child(2), .trades th:nth-child(3), .trades td:nth-child(3) { text-align: right; padding-right: 4px; padding-left: 0; }
.trades .hot { background: #c00000; color: #fff; }
.trades .hot td { border-right-color: #c00000; }
.vscroll { flex: 1; background: #ececec; }
.vb { display: flex; width: 100%; height: 16px; align-items: center; justify-content: center; background: #ececec; border: 1px solid #fff; border-right-color: #666; border-bottom-color: #666; }
.vthumb { height: 8px; background: #ececec; border: 1px solid #fff; border-right-color: #666; border-bottom-color: #666; }

.index-win { left: 1447px; top: 890px; width: 446px; z-index: 4; padding: 7px 4px 8px 6px; }
.index-box { border: 1px solid #6a6a6a; background: #f0f0f0; }
.index { width: 427px; background: #fff; font-weight: bold; font-size: 14px; }
.index th { height: 18px; line-height: 18px; font-size: 15px; background: #006a9c; color: #fff; border-right: 1px solid #222; text-align: right; padding-right: 3px; }
.index th:nth-child(2) { text-align: center; }
.index td { height: 19px; line-height: 19px; text-align: right; padding-right: 5px; }
.index td:first-child { background: #d0d0d0; padding-right: 4px; }
.ic1 { width: 53px; }
.ic2 { width: 70px; }
.ic3 { width: 47px; }
.ic4 { width: 53px; }
.ic5 { width: 64px; }
.ic6 { width: 65px; }
.index td:nth-child(3), .index td:nth-child(4), .index td:nth-child(5) { color: #0000ff; }
.index td:nth-child(6) { color: #ff0000; }

.under { position: absolute; left: 0; width: 345px; background: #f4f7fc; border-right: 1px solid #999; }
.quotes { top: 663px; height: 165px; padding: 2px 0 10px 8px; }
.quotes .under-list { height: 100%; background: #ffffa0; border: 1px solid #555; overflow: hidden; }
.under-list { font-weight: bold; font-size: 13px; padding-left: 0; }
.under-head { background: #006a9c; color: #fff; height: 12px; line-height: 12px; padding-left: 317px; white-space: nowrap; font-weight: normal; }
.under-row { height: 13px; line-height: 13px; padding-left: 316px; font-weight: normal; border-bottom: 1px dotted #999; background: linear-gradient(90deg, #ffffa0 50%, #fff 50%); }
.under-row.b { color: #0000ff; }
.under-row.r { color: #ff0000; }
.totals { top: 827px; height: 146px; padding: 5px 0 0 8px; display: flex; }
.violet { width: 160px; background: #9090ff; border: 1px solid #555; }
.plain { flex: 1; background: #fff; }
.sum-head, .sum-row { height: 15px; line-height: 15px; padding-left: 160px; }
.sum-head { background: #f0f0f0; }
.scrap { position: absolute; left: 0; top: 928px; width: 9px; height: 44px; background: #fff; border: 1px solid #000; border-left: 0; font: bold 13px/42px "Liberation Sans", sans-serif; z-index: 2; overflow: hidden; }
</style>
